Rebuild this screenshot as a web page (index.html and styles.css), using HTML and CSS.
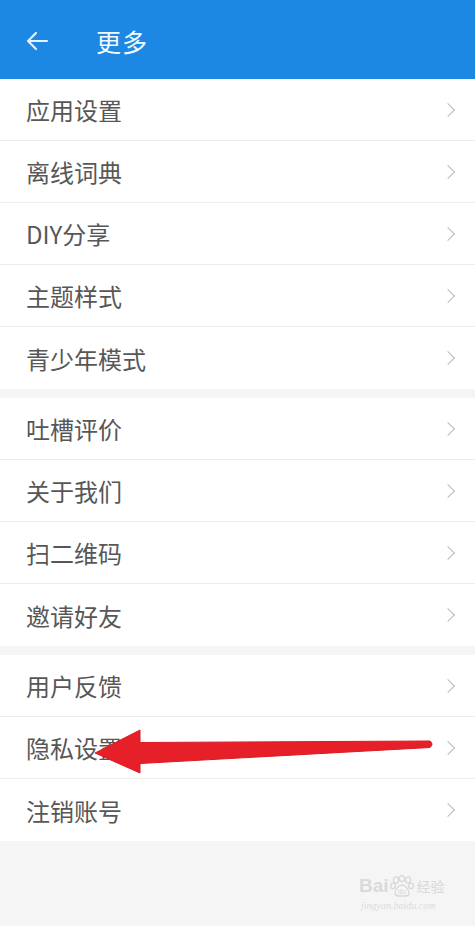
FILE: index.html
```html
<!DOCTYPE html>
<html lang="zh-CN">
<head>
<meta charset="utf-8">
<link rel="stylesheet" href="styles.css">
</head>
<body>
<div class="page">
  <header class="topbar">
    <svg class="back" width="24" height="20" viewBox="0 0 24 20"><path d="M22 10H3M11 2L3 10l8 8" fill="none" stroke="#e8f2fc" stroke-width="2.2" stroke-linecap="round" stroke-linejoin="round"/></svg>
    <span class="title">更多</span>
  </header>
  <section class="group">
    <div class="row"><span>应用设置</span><i class="chev"></i></div>
    <div class="row"><span>离线词典</span><i class="chev"></i></div>
    <div class="row"><span>DIY分享</span><i class="chev"></i></div>
    <div class="row"><span>主题样式</span><i class="chev"></i></div>
    <div class="row"><span>青少年模式</span><i class="chev"></i></div>
  </section>
  <section class="group">
    <div class="row"><span>吐槽评价</span><i class="chev"></i></div>
    <div class="row"><span>关于我们</span><i class="chev"></i></div>
    <div class="row"><span>扫二维码</span><i class="chev"></i></div>
    <div class="row"><span>邀请好友</span><i class="chev"></i></div>
  </section>
  <section class="group">
    <div class="row"><span>用户反馈</span><i class="chev"></i></div>
    <div class="row"><span>隐私设置</span><i class="chev"></i></div>
    <div class="row"><span>注销账号</span><i class="chev"></i></div>
  </section>
  <svg class="arrow" width="475" height="926" viewBox="0 0 475 926">
    <path d="M95 753 L140 730 L140 742.5 L430 741 Q434 744 430 747.5 L140 763.5 L140 773 Z" fill="#e61f28" stroke="#d81c24" stroke-width="1" stroke-linejoin="round"/>
  </svg>
  <div class="watermark">
    <div class="wm-top"><span class="wm-bai">Bai</span><svg width="26" height="22" viewBox="0 0 26 22"><g fill="none" stroke="#d8d8d8" stroke-width="1.3"><ellipse cx="7" cy="5" rx="2.6" ry="3.2"/><ellipse cx="13" cy="3.5" rx="2.6" ry="3"/><ellipse cx="19" cy="5" rx="2.6" ry="3.2"/><ellipse cx="4" cy="11" rx="2.3" ry="2.8"/><ellipse cx="22" cy="11" rx="2.3" ry="2.8"/><path d="M6 19c0-5 4-9 7-9s7 4 7 9c0 2-3 2-7 2s-7 0-7-2z"/></g><text x="13" y="19" font-size="7" text-anchor="middle" fill="#d8d8d8" font-family="Liberation Sans">du</text></svg><span class="wm-jy">经验</span></div>
    <div class="wm-url">jingyan.baidu.com</div>
  </div>
</div>
</body>
</html>
```
FILE: styles.css
```css
* { box-sizing: border-box; }
html, body { margin: 0; padding: 0; }
body {
  background: #f5f5f5;
  font-family: "Noto Sans CJK SC", "Noto Sans", sans-serif;
  width: 475px;
  height: 926px;
  overflow: hidden;
}
.page { position: relative; width: 475px; height: 926px; }
.topbar {
  height: 79px;
  background: #1d87e4;
  display: flex;
  align-items: center;
  padding: 3px 0 0 25px;
}
.back { display: block; margin-right: 47px; }
.title {
  color: #f4f9fe;
  font-size: 25px;
  line-height: 1;
  letter-spacing: 1px;
}
.group {
  background: #fff;
  margin-bottom: 9px;
}
.row {
  height: 62px;
  display: flex;
  align-items: center;
  justify-content: space-between;
  padding: 0 20px 0 26px;
  border-bottom: 1px solid #ededed;
  color: #575757;
  font-size: 24px;
}
.row:last-child { border-bottom: none; }
.chev {
  width: 10px;
  height: 10px;
  border-right: 1.5px solid #b3bcc4;
  border-top: 1.5px solid #b3bcc4;
  transform: rotate(45deg);
  margin-right: 2px;
}
.arrow { position: absolute; left: 0; top: 0; pointer-events: none; }
.watermark {
  position: absolute;
  left: 359px;
  top: 874px;
  color: #d8d8d8;
  font-family: "Liberation Sans", sans-serif;
}
.wm-top { display: flex; align-items: center; height: 24px; }
.wm-bai { font-size: 19px; font-weight: bold; color: #dadada; }
.wm-jy { font-family: "Noto Sans CJK SC", sans-serif; font-size: 14px; color: #d8d8d8; margin-left: 2px; }
.wm-url { font-family: "Liberation Serif", serif; font-style: italic; font-size: 10px; color: #dcdcdc; margin-top: 2px; margin-left: 2px; }
```
